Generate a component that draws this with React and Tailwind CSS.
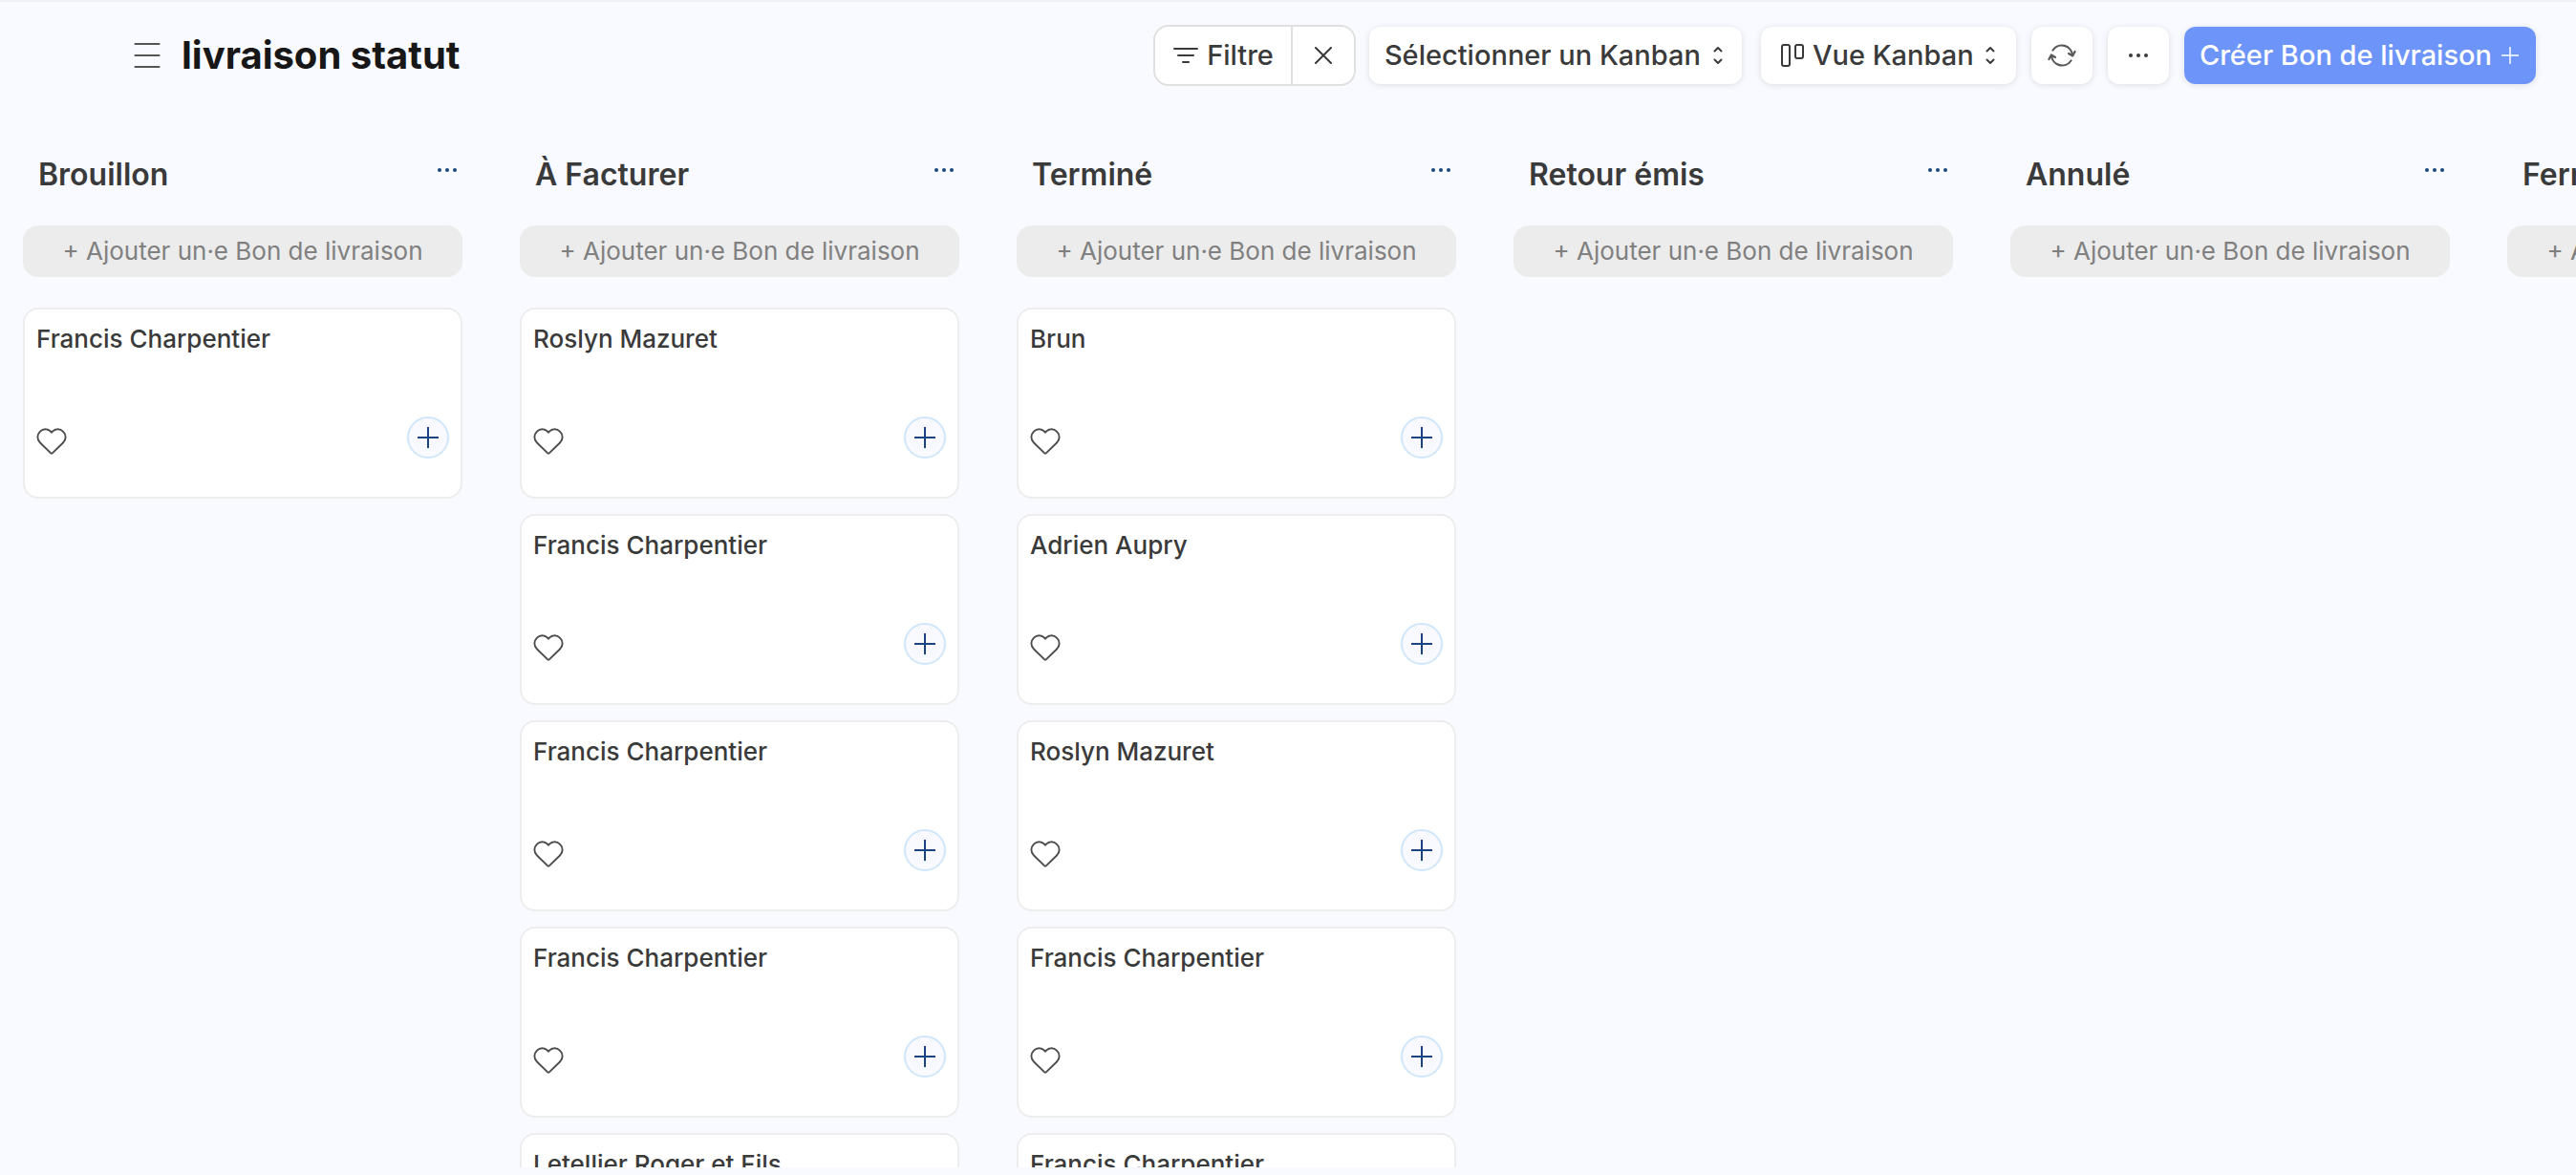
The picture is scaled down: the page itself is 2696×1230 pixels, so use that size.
const columns = [
  { title: 'Brouillon', cards: ['Francis Charpentier'] },
  {
    title: 'À Facturer',
    cards: [
      'Roslyn Mazuret',
      'Francis Charpentier',
      'Francis Charpentier',
      'Francis Charpentier',
      'Letellier Roger et Fils',
    ],
  },
  {
    title: 'Terminé',
    cards: [
      'Brun',
      'Adrien Aupry',
      'Roslyn Mazuret',
      'Francis Charpentier',
      'Francis Charpentier',
    ],
  },
  { title: 'Retour émis', cards: [] },
  { title: 'Annulé', cards: [] },
  { title: 'Fermé', cards: [] },
];

function Dots({ className }) {
  return (
    <svg viewBox="0 0 20 4" className={className} fill="currentColor" aria-hidden="true">
      <circle cx="2" cy="2" r="2" />
      <circle cx="10" cy="2" r="2" />
      <circle cx="18" cy="2" r="2" />
    </svg>
  );
}

function Plus({ className, strokeWidth = 2 }) {
  return (
    <svg viewBox="0 0 22 22" className={className} fill="none" stroke="currentColor" strokeWidth={strokeWidth} aria-hidden="true">
      <path d="M11 0V22M0 11H22" />
    </svg>
  );
}

function Heart() {
  return (
    <svg viewBox="0 0 32 28" className="h-7 w-8" fill="none" stroke="currentColor" strokeWidth="1.9" strokeLinejoin="round" aria-hidden="true">
      <path d="M16 4.8C13.200 .5 7.500 .2 4 3.700C.5 7.200 .5 12 4 15.500L15.200 26.400Q16 27.100 16.800 26.400L28 15.500C31.500 12 31.500 7.200 28 3.700C24.500 .2 18.800 .5 16 4.800Z" />
    </svg>
  );
}

function Sorter() {
  return (
    <svg viewBox="0 0 10 20" className="pointer-events-none h-5 w-2.5" fill="none" stroke="currentColor" strokeWidth="2" strokeLinecap="round" strokeLinejoin="round" aria-hidden="true">
      <path d="M1.500 5.500L5 2L8.500 5.500M1.500 14.500L5 18L8.500 14.500" />
    </svg>
  );
}

function Card({ name }) {
  return (
    <article className="flex h-[200px] shrink-0 flex-col justify-between rounded-2xl border-2 border-[#ededed] bg-white px-3 pt-3 pb-10">
      <h3 className="text-[26px] leading-[38px] font-medium">{name}</h3>
      <div className="flex items-center justify-between">
        <button type="button" aria-label="Ajouter aux favoris" className="pt-2 text-[#4d4d4d]">
          <Heart />
        </button>
        <button type="button" aria-label="Ajouter" className="flex size-11 items-center justify-center rounded-full border-2 border-[#cfe6fb] bg-[#f9faff] text-[#1c4480]">
          <Plus className="size-[22px]" />
        </button>
      </div>
    </article>
  );
}

function Column({ title, cards }) {
  return (
    <section className="flex w-[460px] shrink-0 flex-col">
      <div className="flex h-[78px] shrink-0 items-start justify-between pr-1.5 pl-4">
        <h2 className="text-[32px] leading-[50px] font-semibold">{title}</h2>
        <button type="button" aria-label={'Options ' + title} className="mt-3 flex h-4 items-center text-[#1c4480]">
          <Dots className="h-1 w-5" />
        </button>
      </div>
      <button type="button" className="h-[54px] shrink-0 rounded-2xl bg-[#ececec] pb-0.5 text-[26px] text-[#808080]">
        + Ajouter un·e Bon de livraison
      </button>
      <div className="mt-8 flex flex-col gap-4">
        {cards.map((name, i) => (
          <Card key={i} name={name} />
        ))}
      </div>
    </section>
  );
}

export default function App() {
  return (
    <div className="flex h-screen flex-col overflow-hidden border-t-2 border-[#efeff5] bg-[#f9faff] pb-2 font-['Inter',sans-serif] text-[#3a3a3a] [font-optical-sizing:none]">
      <header className="flex shrink-0 items-center justify-between pt-6 pr-[42px] pl-[140px]">
        <div className="flex items-center gap-[22px]">
          <button type="button" aria-label="Menu" className="text-[#555555]">
            <svg viewBox="0 0 28 28" className="size-7" fill="none" stroke="currentColor" strokeWidth="2.2" strokeLinecap="round" aria-hidden="true">
              <path d="M1.500 2H26.500M1.500 14H26.500M1.500 26H26.500" />
            </svg>
          </button>
          <h1 className="text-[40px] leading-[60px] font-bold text-[#171717]">livraison statut</h1>
        </div>

        <div className="flex items-center gap-4 text-[29px] font-medium">
          <div className="-mr-0.5 flex h-16 divide-x-2 divide-[#e0e0e0] overflow-hidden rounded-2xl border-2 border-[#e0e0e0] bg-white">
            <button type="button" className="flex items-center gap-2 px-[18px]">
              <svg viewBox="0 0 28 18" className="h-[18px] w-7" fill="none" stroke="currentColor" strokeWidth="2" strokeLinecap="round" aria-hidden="true">
                <path d="M2 2H26M6 9H22M11 16H17" />
              </svg>
              Filtre
            </button>
            <button type="button" aria-label="Effacer le filtre" className="flex w-16 items-center justify-center">
              <svg viewBox="0 0 18 18" className="size-[18px]" fill="none" stroke="currentColor" strokeWidth="2" strokeLinecap="round" aria-hidden="true">
                <path d="M1 1L17 17M17 1L1 17" />
              </svg>
            </button>
          </div>

          <div className="mr-1 flex h-[60px] items-center gap-3 rounded-xl bg-white pr-5 pl-4 shadow-[0_1px_6px_rgba(0,0,0,0.12)]">
            <select aria-label="Kanban" className="appearance-none bg-transparent">
              <option>Sélectionner un Kanban</option>
            </select>
            <Sorter />
          </div>

          <div className="flex h-[60px] items-center rounded-xl bg-white pr-[22px] pl-5 shadow-[0_1px_6px_rgba(0,0,0,0.12)]">
            <svg viewBox="0 0 26 26" className="mr-2 size-[26px]" fill="none" stroke="currentColor" strokeWidth="2" aria-hidden="true">
              <rect x="2" y="2" width="8" height="22" rx="2" />
              <rect x="16" y="2" width="8" height="14" rx="2" />
            </svg>
            <select aria-label="Vue" className="mr-3 appearance-none bg-transparent">
              <option>Vue Kanban</option>
            </select>
            <Sorter />
          </div>

          <button type="button" aria-label="Actualiser" className="flex h-[60px] w-16 items-center justify-center rounded-xl bg-white text-[#5a5a5a] shadow-[0_1px_6px_rgba(0,0,0,0.12)]">
            <svg viewBox="0 0 30 26" className="h-[26px] w-[30px]" fill="none" stroke="currentColor" strokeWidth="2.2" strokeLinecap="round" strokeLinejoin="round" aria-hidden="true">
              <path d="M5.500 7.500A11.200 11.200 0 0 1 26 13M22 11L26.200 13.500L28.600 9" />
              <path d="M24.500 18.500A11.200 11.200 0 0 1 4 13M8 15L3.800 12.500L1.400 17" />
            </svg>
          </button>

          <button type="button" aria-label="Plus d’options" className="flex h-[60px] w-16 items-center justify-center rounded-xl bg-white shadow-[0_1px_6px_rgba(0,0,0,0.12)]">
            <Dots className="h-1 w-5" />
          </button>

          <button type="button" className="flex h-[60px] items-center gap-2.5 rounded-xl bg-[#6d94f8] pr-[18px] pl-4 text-white shadow-[0_1px_6px_rgba(0,0,0,0.12)]">
            Créer Bon de livraison
            <Plus className="size-[18px]" strokeWidth={1.8} />
          </button>
        </div>
      </header>

      <main className="mt-[68px] flex min-h-0 flex-1 gap-[60px] overflow-hidden pl-6">
        {columns.map((column) => (
          <Column key={column.title} title={column.title} cards={column.cards} />
        ))}
      </main>
    </div>
  );
}
